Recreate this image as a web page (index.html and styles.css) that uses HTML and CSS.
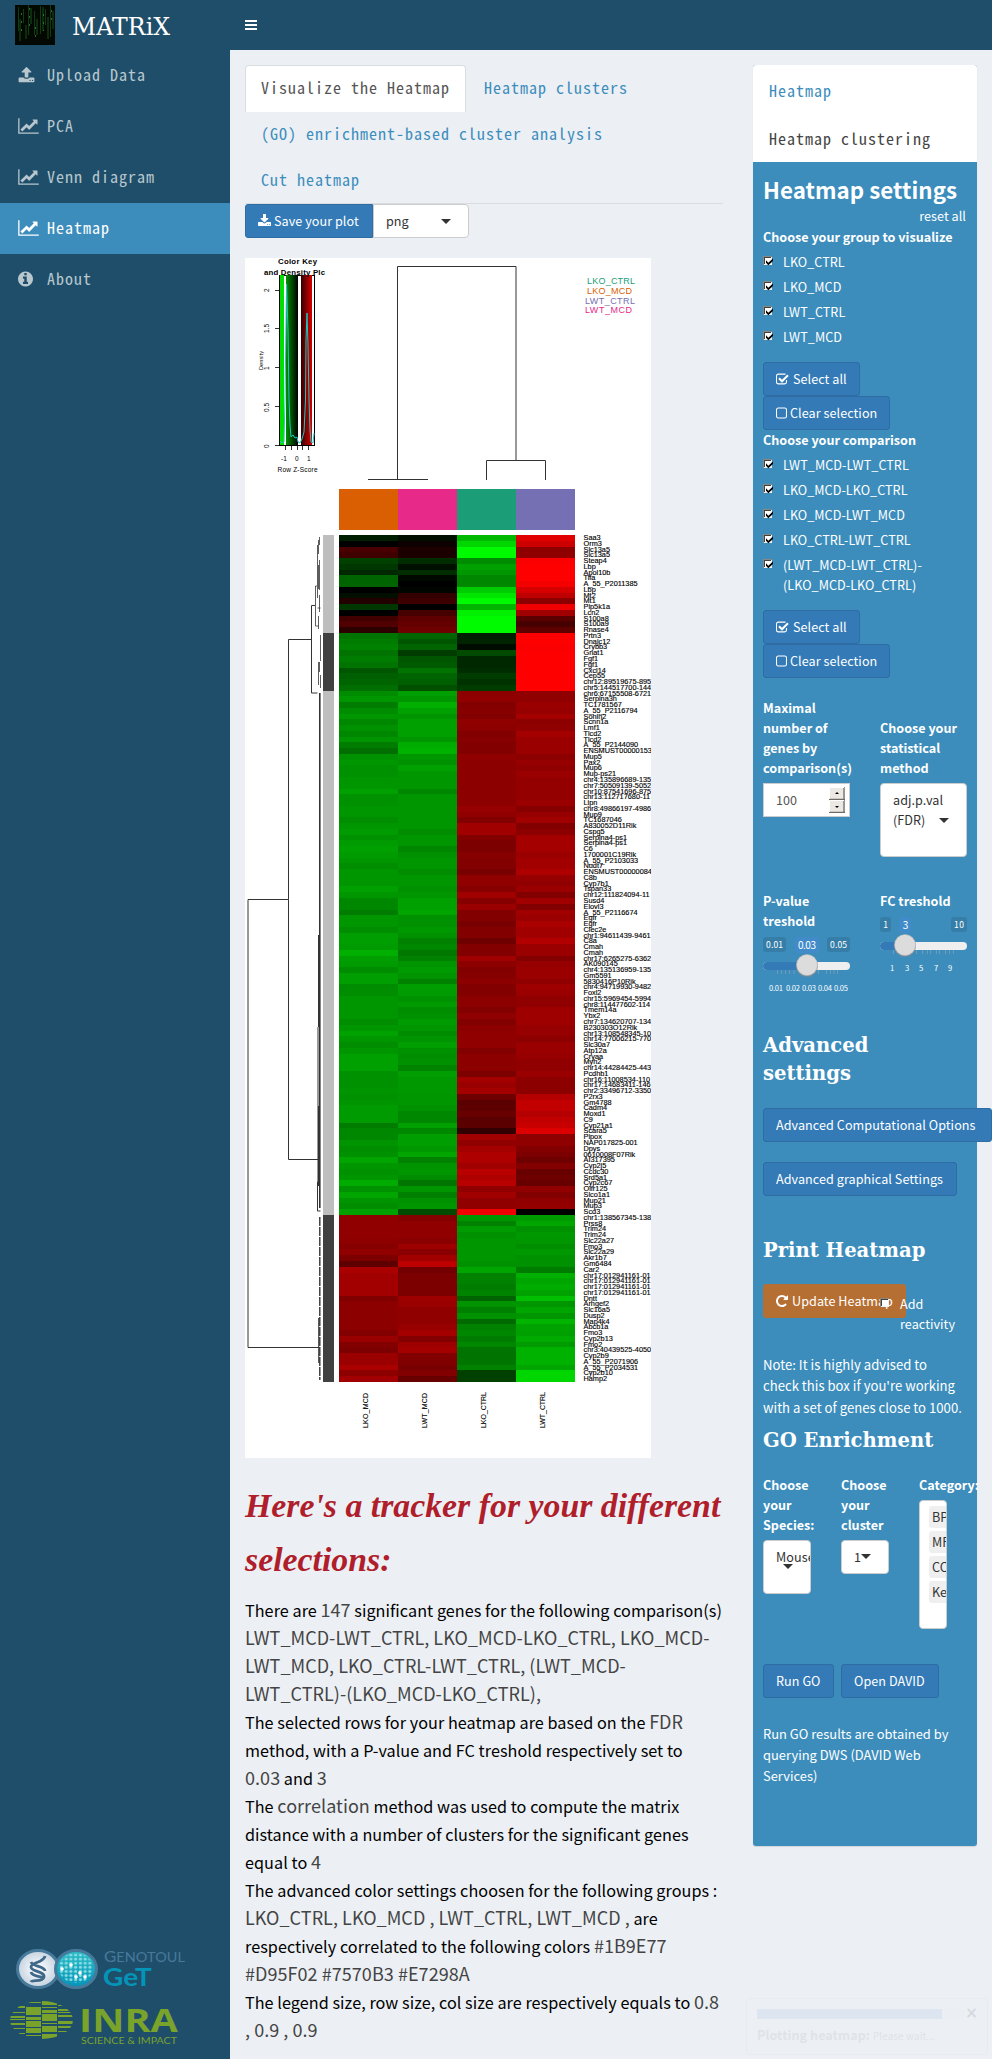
FILE: index.html
```html
<!DOCTYPE html>
<html lang="en">
<head>
<meta charset="utf-8">
<title>MATRiX</title>
<link rel="stylesheet" href="styles.css">
</head>
<body>
<svg width="0" height="0" class="defs">
  <symbol id="i-upload" viewBox="0 0 1792 1792"><path d="M1344 1472q0-26-19-45t-45-19-45 19-19 45 19 45 45 19 45-19 19-45zm256 0q0-26-19-45t-45-19-45 19-19 45 19 45 45 19 45-19 19-45zm128-224v320q0 40-28 68t-68 28h-1472q-40 0-68-28t-28-68v-320q0-40 28-68t68-28h427q21 56 70.5 92t110.5 36h256q61 0 110.5-36t70.5-92h427q40 0 68 28t28 68zm-325-648q-17 40-59 40h-256v448q0 26-19 45t-45 19h-256q-26 0-45-19t-19-45v-448h-256q-42 0-59-40-17-39 14-69l448-448q18-19 45-19t45 19l448 448q31 30 14 69z"/></symbol>
  <symbol id="i-chart" viewBox="0 0 2048 1792"><path d="M2048 1536v128h-2048v-1536h128v1408h1920zm-128-1248v435q0 21-19.5 29.5t-35.5-7.5l-121-121-633 633q-10 10-23 10t-23-10l-233-233-416 416-192-192 585-585q10-10 23-10t23 10l233 233 464-464-121-121q-16-16-7.5-35.5t29.5-19.5h435q14 0 23 9t9 23z"/></symbol>
  <symbol id="i-info" viewBox="128 0 1536 1792"><path d="M1152 1376v-160q0-14-9-23t-23-9h-96v-512q0-14-9-23t-23-9h-320q-14 0-23 9t-9 23v160q0 14 9 23t23 9h96v320h-96q-14 0-23 9t-9 23v160q0 14 9 23t23 9h448q14 0 23-9t9-23zm-128-896v-160q0-14-9-23t-23-9h-192q-14 0-23 9t-9 23v160q0 14 9 23t23 9h192q14 0 23-9t9-23zm640 416q0 209-103 385.5t-279.5 279.5-385.5 103-385.5-103-279.5-279.5-103-385.5 103-385.5 279.5-279.5 385.5-103 385.5 103 279.5 279.5 103 385.5z"/></symbol>
  <symbol id="i-download" viewBox="64 0 1664 1792"><path d="M1344 1344q0-26-19-45t-45-19-45 19-19 45 19 45 45 19 45-19 19-45zm256 0q0-26-19-45t-45-19-45 19-19 45 19 45 45 19 45-19 19-45zm128-224v320q0 40-28 68t-68 28h-1472q-40 0-68-28t-28-68v-320q0-40 28-68t68-28h465l135 136q58 56 136 56t136-56l136-136h464q40 0 68 28t28 68zm-325-569q17 41-14 70l-448 448q-18 19-45 19t-45-19l-448-448q-31-29-14-70 17-39 59-39h256v-448q0-26 19-45t45-19h256q26 0 45 19t19 45v448h256q42 0 59 39z"/></symbol>
  <symbol id="i-repeat" viewBox="128 0 1536 1792"><path d="M1664 256v448q0 26-19 45t-45 19h-448q-42 0-59-40-17-39 14-69l138-138q-148-137-349-137-104 0-198.5 40.5t-163.5 109.5-109.5 163.5-40.5 198.5 40.5 198.5 109.5 163.5 163.5 109.5 198.5 40.5q119 0 225-52t179-147q7-10 23-12 15 0 25 9l137 138q9 8 9.5 20.5t-7.5 22.5q-109 132-264 204.5t-327 72.5q-156 0-298-61t-245-164-164-245-61-298 61-298 164-245 245-164 298-61q147 0 284.5 55.5t244.5 156.5l130-129q29-31 70-14 39 17 39 59z"/></symbol>
  <symbol id="i-checked" viewBox="0 0 13 12"><path d="M10.5 7v2a1.9 1.9 0 0 1-1.9 1.9H2.4A1.9 1.9 0 0 1 .5 9V3a1.9 1.9 0 0 1 1.9-1.9h6.2q.6 0 1 .2" fill="none" stroke="#fff" stroke-width="1.1"/><path d="M3 5.3l3 3 6-6" fill="none" stroke="#fff" stroke-width="2"/></symbol>
  <symbol id="i-square" viewBox="0 0 11 12"><rect x=".5" y="1" width="10" height="10" rx="1.8" fill="none" stroke="#fff" stroke-width="1.1"/></symbol>
  <symbol id="i-box" viewBox="0 0 10 10"><path d="M0 0h9v9H0z" fill="#f2f2f2"/><path d="M0 9V0h9v1H1v8z" fill="#8a8680"/><path d="M1 8V1h7v1H2v6z" fill="#45423e"/><path d="M2 2h6v6H2z" fill="#fff"/></symbol>
  <symbol id="i-tick" viewBox="0 0 10 10"><use href="#i-box" width="10" height="10"/><path d="M3 4.2v2.6l2.3 2.4L10 5V2.6L5.3 6.8z" fill="#000"/></symbol>
</svg>

<header class="navbar">
  <div class="brand">
    <svg class="brand-art" viewBox="0 0 40 40">
      <rect width="40" height="40" fill="#030803"/>
      <g stroke="#0f4a12" stroke-width="1"><path d="M3.5 2v24M8.5 4v14M13.5 0v30M19.500 6v24M25.5 1v28M30.5 4v16M35.5 0v32" opacity=".8"/></g>
      <g stroke="#123c13" stroke-width="2" opacity=".7"><path d="M5 14v22M11 20v14M16 3v16M22 14v16M28 2v24M33 12v22M38 6v18"/></g>
      <g stroke="#4a7a49" stroke-width="1" stroke-dasharray="2 6" opacity=".8"><path d="M6.500 8v18M14.500 3v24M20.500 22v12M28.500 9v17M36.500 5v12"/></g>
    </svg>
    <span>MATRiX</span>
  </div>
  <div class="burger"><i></i><i></i><i></i></div>
</header>

<div class="shell">
  <aside class="sidebar">
    <nav>
      <a><svg class="w17"><use href="#i-upload"/></svg><span>Upload Data</span></a>
      <a><svg class="w21"><use href="#i-chart"/></svg><span>PCA</span></a>
      <a><svg class="w21"><use href="#i-chart"/></svg><span>Venn diagram</span></a>
      <a class="active"><svg class="w21"><use href="#i-chart"/></svg><span>Heatmap</span></a>
      <a><svg class="w15"><use href="#i-info"/></svg><span>About</span></a>
    </nav>
    <svg class="logos" viewBox="0 1940 230 119" width="230" height="119">
      <defs>
        <radialGradient id="pale"><stop offset=".3" stop-color="#f0f4f8"/><stop offset="1" stop-color="#c4d2df"/></radialGradient>
        <linearGradient id="teal" x2="0" y2="1"><stop offset="0" stop-color="#2fbfc6"/><stop offset="1" stop-color="#0394ba"/></linearGradient>
        <pattern id="dots" width="4.75" height="4.1" patternUnits="userSpaceOnUse" x="59" y="1953"><ellipse cx="2.400" cy="2" rx="1.600" ry="1.400" fill="#8adbe3"/></pattern>
        <clipPath id="globe"><ellipse cx="41.500" cy="2020" rx="31.500" ry="19"/></clipPath>
      </defs>
      <ellipse cx="38" cy="1969" rx="20.500" ry="18.500" fill="url(#pale)" stroke="#47799a" stroke-width="3"/>
      <path d="M45 1956c-1 7-14 6-14 11s14 4 13 10-12 2-13 5M31 1962c2 5 14 4 14 9M31 1972c1 5 10 4 13 6" fill="none" stroke="#3e6988" stroke-width="2.800"/>
      <ellipse cx="76" cy="1969" rx="20.500" ry="18.500" fill="url(#teal)" stroke="#47799a" stroke-width="3"/>
      <ellipse cx="76" cy="1968" rx="17" ry="15" fill="url(#dots)"/>
      <g fill="#fff"><circle cx="71" cy="1965" r="1.800"/><circle cx="62" cy="1969" r="1.800"/><circle cx="80" cy="1973" r="1.800"/><circle cx="85" cy="1977" r="1.800"/><circle cx="76" cy="1977" r="1.800"/></g>
      <text x="104" y="1962" class="lg-geno" textLength="81" lengthAdjust="spacingAndGlyphs">G<tspan font-size="12.500">ENOTOUL</tspan></text>
      <text x="103" y="1986" class="lg-get" textLength="49" lengthAdjust="spacingAndGlyphs">GeT</text>
      <g clip-path="url(#globe)" fill="#7aa32c">
        <path d="M10 2003h15v1H10zM10 2006h15v2H10zM10 2012h15v1H10zM10 2016h15v2H10zM10 2019h15v1H10zM10 2023h15v2H10zM10 2028h15v1H10zM10 2033h15v1H10z"/>
        <path d="M26 2002h15v1H26zM26 2007h15v8H26zM26 2017h15v3H26zM26 2021h15v6H26zM26 2028h15v5H26zM26 2035h15v1H26z"/>
        <path d="M42 2001h15v4H42zM42 2007h15v1H42zM42 2010h15v3H42zM42 2014h15v7H42zM42 2023h15v1H42zM42 2026h15v6H42zM42 2034h15v5H42z"/>
        <path d="M58 2005h15v1H58zM58 2009h15v2H58zM58 2012h15v1H58zM58 2015h15v2H58zM58 2021h15v3H58zM58 2026h15v2H58zM58 2031h15v1H58z"/>
      </g>
      <text x="79" y="2031.500" class="lg-inra" textLength="99" lengthAdjust="spacingAndGlyphs">INRA</text>
      <text x="81" y="2044" class="lg-sci" textLength="96" lengthAdjust="spacingAndGlyphs">SCIENCE &amp; IMPACT</text>
    </svg>
  </aside>

  <main class="main">
    <ul class="tabs">
      <li class="on">Visualize the Heatmap</li><li>Heatmap clusters</li><li>(GO) enrichment-based cluster analysis</li><li>Cut heatmap</li>
    </ul>
    <div class="save">
      <span class="btn"><svg class="ic13"><use href="#i-download"/></svg>Save your plot</span>
      <span class="picker">png<i class="caret"></i></span>
    </div>
    <svg id="plot" class="plot" viewBox="245 258 406 1200" width="406" height="1200">
      <defs>
        <linearGradient id="kg"><stop offset="0" stop-color="#009200"/><stop offset="1" stop-color="#000"/></linearGradient>
        <linearGradient id="kr"><stop offset="0" stop-color="#300"/><stop offset="1" stop-color="#d80000"/></linearGradient>
      </defs>
      <rect x="245" y="258" width="406" height="1200" fill="#fff"/>
      <g class="key">
        <rect x="279.500" y="275.500" width="35" height="170" fill="#fff" stroke="#000"/>
        <rect x="280" y="275" width="4" height="170" fill="#00e000"/>
        <rect x="286" y="275" width="12" height="170" fill="url(#kg)"/>
        <rect x="301" y="275" width="11" height="170" fill="url(#kr)"/>
        <polyline points="280,441 282,443 284,442 285,400 286.500,284 288,330 289,400 290,425 291,437 293,435 295,438 297,437 298,442 300,443 302,439 304,432 305.500,400 306,340 307,313 308,345 309,400 310,430 311,442 313,443 314,433" fill="none" stroke="#1dc9c4"/>
        <text x="297.500" y="264" text-anchor="middle" font-weight="bold" font-size="7.800" textLength="39">Color Key</text>
        <text x="264" y="275" font-weight="bold" font-size="7.800" textLength="61">and Density Plc</text>
        <path d="M275 290.500h4M275 328.500h4M275 367.500h4M275 406.500h4M275 445.500h4M285.500 446v4M291.500 446v4M297.500 446v4M302.500 446v4M308.500 446v4" stroke="#333" fill="none"/>
        <text transform="translate(269 292)rotate(-90)">2</text><text transform="translate(269 333)rotate(-90)">1.5</text><text transform="translate(269 370)rotate(-90)">1</text><text transform="translate(269 412)rotate(-90)">0.5</text><text transform="translate(269 448)rotate(-90)">0</text>
        <text transform="translate(263 370)rotate(-90)" class="dens" textLength="19" lengthAdjust="spacingAndGlyphs">Density</text>
        <text x="281" y="461">-1</text><text x="295" y="461">0</text><text x="307" y="461">1</text>
        <text x="277.500" y="472" textLength="40">Row Z-Score</text>
      </g>
      <g class="tree">
        <path d="M368 479.500h60M397.500 479V266.500h118.500V460.500M486.500 480V460.500h59V480"/>
        <path d="M288.500 899.500H248V1057M288.500 899.500V639.500h22.500M288.500 899.500v260h30M311.500 605.500v87.500h6M311.500 605.500h3.500M248 1057V1347.500h71" transform="translate(0 0)"/>
        <path d="M315.500 586v40h3M315.500 586h1.500M317.500 545v53M319.500 537v8M318.500 540v14M319.500 560v30M318.500 565v24M319.500 595v17M318.500 616v13M317.500 608h3M318.500 662v23M320.500 635v26M319.500 662v10M320.500 675v13" stroke-width=".8"/>
        <path d="M319.800 693V1208" stroke-width="1.600"/><path d="M318.500 935v92M318 1027v155h-.5v29h3M318.500 1106v80" stroke-width="1"/>
        <path d="M319.800 1217V1380" stroke-width="1.400" stroke-dasharray="9 1"/><path d="M318.700 1318v45"/>
      </g>
      <path d="M339 489h59v41h-59z" fill="#d95f02"/><path d="M398 489h59v41h-59z" fill="#e7298a"/><path d="M457 489h59v41h-59z" fill="#1b9e77"/><path d="M516 489h59v41h-59z" fill="#7570b3"/>
      <path d="M323 535h11v98h-11zM323 691h11v524h-11z" fill="#bebebe"/><path d="M323 633h11v58h-11zM323 1215h11v167h-11z" fill="#404040"/>
      <g id="cells" shape-rendering="crispEdges"></g>
      <g id="genes" class="genes"></g>
      <g class="legend">
        <text x="587" y="284" fill="#1b9e77" textLength="48">LKO_CTRL</text><text x="587" y="294" fill="#d95f02" textLength="45">LKO_MCD</text><text x="585" y="304" fill="#7570b3" textLength="50">LWT_CTRL</text><text x="585" y="313" fill="#e7298a" textLength="47">LWT_MCD</text>
      </g>
      <g class="cols">
        <text transform="translate(368 1428)rotate(-90)" textLength="35">LKO_MCD</text><text transform="translate(427 1428)rotate(-90)" textLength="35">LWT_MCD</text><text transform="translate(486 1428)rotate(-90)" textLength="36">LKO_CTRL</text><text transform="translate(545 1428)rotate(-90)" textLength="36">LWT_CTRL</text>
      </g>
    </svg>

    <h1 class="script"><span>Here's a tracker for your different</span><br><span>selections:</span></h1>
    <div class="tracker">There are <b>147</b> significant genes for the following comparison(s)<br><b>LWT_MCD-LWT_CTRL, LKO_MCD-LKO_CTRL, LKO_MCD-<br>LWT_MCD, LKO_CTRL-LWT_CTRL, (LWT_MCD-<br>LWT_CTRL)-(LKO_MCD-LKO_CTRL),</b><br>The selected rows for your heatmap are based on the <b>FDR</b><br>method, with a P-value and FC treshold respectively set to<br><b>0.03</b> and <b>3</b><br>The <b>correlation</b> method was used to compute the matrix<br>distance with a number of clusters for the significant genes<br>equal to <b>4</b><br>The advanced color settings choosen for the following groups :<br><b>LKO_CTRL, LKO_MCD , LWT_CTRL, LWT_MCD ,</b> are<br>respectively correlated to the following colors <b>#1B9E77<br>#D95F02 #7570B3 #E7298A</b><br>The legend size, row size, col size are respectively equals to <b>0.8<br>, 0.9 , 0.9</b></div>
  </main>

  <section class="side">
    <div class="box">
      <div class="box-tabs"><div class="link">Heatmap</div><div>Heatmap clustering</div></div>
      <div class="box-body">
        <h3 class="title">Heatmap settings</h3>
        <div class="reset">reset all</div>
        <div class="label">Choose your group to visualize</div>
        <div class="checks">
          <label><svg><use href="#i-tick"/></svg>LKO_CTRL</label><label><svg><use href="#i-tick"/></svg>LKO_MCD</label><label><svg><use href="#i-tick"/></svg>LWT_CTRL</label><label><svg><use href="#i-tick"/></svg>LWT_MCD</label>
        </div>
        <div class="pair"><span class="btn"><svg class="ic13"><use href="#i-checked"/></svg>Select all</span><span class="btn"><svg class="ic11"><use href="#i-square"/></svg>Clear selection</span></div>
        <div class="label">Choose your comparison</div>
        <div class="checks">
          <label><svg><use href="#i-tick"/></svg>LWT_MCD-LWT_CTRL</label><label><svg><use href="#i-tick"/></svg>LKO_MCD-LKO_CTRL</label><label><svg><use href="#i-tick"/></svg>LKO_MCD-LWT_MCD</label><label><svg><use href="#i-tick"/></svg>LKO_CTRL-LWT_CTRL</label><label><svg><use href="#i-tick"/></svg>(LWT_MCD-LWT_CTRL)-<br>(LKO_MCD-LKO_CTRL)</label>
        </div>
        <div class="pair"><span class="btn"><svg class="ic13"><use href="#i-checked"/></svg>Select all</span><span class="btn"><svg class="ic11"><use href="#i-square"/></svg>Clear selection</span></div>

        <div class="two stats">
          <div><div class="label">Maximal<br>number of<br>genes by<br>comparison(s)</div>
            <div class="number">100<svg width="16" height="26" viewBox="0 0 16 26"><path d="M0 0h16v13H0zM0 13h16v13H0z" fill="#ece9e4"/><path d="M15 0v26M0 12.500h16M0 25.500h16" stroke="#6f6c68" stroke-width="1.300"/><path d="M.5 12V.5H15M.5 25V13.500H15" stroke="#fff" fill="none"/><path d="M6 7l2-2 2 2zM6 19l2 2 2-2z"/></svg></div></div>
          <div><div class="label low">Choose your<br>statistical<br>method</div><div class="select tall">adj.p.val<br>(FDR)<i class="caret"></i></div></div>
        </div>
        <div class="two ranges">
          <div><div class="label">P-value<br>treshold</div>
            <svg class="slider" viewBox="0 0 87 64" width="87" height="64">
              <rect y="5" width="23" height="15" rx="3" fill="#367ea8"/><rect x="64" y="5" width="23" height="15" rx="3" fill="#367ea8"/><rect x="32" y="5" width="24" height="16" rx="3" fill="#428bca"/>
              <text x="11.500" y="16" textLength="17">0.01</text><text x="75.500" y="16" textLength="17">0.05</text><text x="44" y="17" class="cur" textLength="18">0.03</text>
              <path d="M14.500 37v5M18.500 37v5M22.500 37v5M26.500 37v5M31 37v5M55.500 37v5M63.500 37v5M67.500 37v5M71 37v5M74.500 37v5" stroke="#6b9bb8"/>
              <rect y="30" width="87" height="8" rx="4" fill="#efefef"/><path d="M44 30H4a4 4 0 0 0 0 8h40z" fill="#337ab7"/>
              <circle cx="44" cy="34" r="11" fill="#888" opacity=".6"/><circle cx="44" cy="33" r="10.500" fill="#dcdcdc" stroke="#b3b3b3" stroke-width=".6"/>
              <g class="ticks"><text x="13" y="59" textLength="14">0.01</text><text x="30" y="59" textLength="14">0.02</text><text x="46" y="59" textLength="14">0.03</text><text x="62" y="59" textLength="14">0.04</text><text x="78" y="59" textLength="14">0.05</text></g>
            </svg></div>
          <div><div class="label">FC treshold</div>
            <svg class="slider" viewBox="0 0 87 64" width="87" height="64">
              <rect y="5" width="11" height="15" rx="3" fill="#367ea8"/><rect x="71" y="5" width="16" height="15" rx="3" fill="#367ea8"/><rect x="19" y="5" width="12" height="16" rx="3" fill="#428bca"/>
              <text x="5.500" y="16">1</text><text x="79" y="16" textLength="10">10</text><text x="25.500" y="17" class="cur">3</text>
              <path d="M13.500 37v5M36.500 37v5M42.500 37v5M47.500 37v5M50.500 37v5M56.500 37v5M59.500 37v5M65.500 37v5M69.500 37v5M73.500 37v5" stroke="#6b9bb8"/>
              <rect y="30" width="87" height="8" rx="4" fill="#efefef"/><path d="M25 30H4a4 4 0 0 0 0 8h21z" fill="#337ab7"/>
              <circle cx="25" cy="34" r="11" fill="#888" opacity=".6"/><circle cx="25" cy="33" r="10.500" fill="#dcdcdc" stroke="#b3b3b3" stroke-width=".6"/>
              <g class="ticks"><text x="12" y="59">1</text><text x="27" y="59">3</text><text x="41" y="59">5</text><text x="56" y="59">7</text><text x="70" y="59">9</text></g>
            </svg></div>
        </div>

        <h4 class="serif adv">Advanced<br>settings</h4>
        <span class="btn w229">Advanced Computational Options</span>
        <span class="btn w194">Advanced graphical Settings</span>
        <h4 class="serif">Print Heatmap</h4>
        <div class="update"><span class="btn orange"><svg class="ic12"><use href="#i-repeat"/></svg>Update Heatmap</span>
          <label class="react"><svg><use href="#i-box"/></svg>Add<br>reactivity</label></div>
        <p class="note">Note: It is highly advised to<br>check this box if you're working<br>with a set of genes close to 1000.</p>
        <h4 class="serif go">GO Enrichment</h4>
        <div class="three">
          <div><div class="label">Choose<br>your<br>Species:</div><div class="select mouse">Mouse<i class="caret"></i></div></div>
          <div><div class="label">Choose<br>your<br>cluster</div><div class="select one">1<i class="caret"></i></div></div>
          <div><div class="label">Category:</div><div class="select cats"><span>BP</span><span>MF</span><span>CC</span><span>Kegg</span></div></div>
        </div>
        <div class="gobtns"><span class="btn w71">Run GO</span><span class="btn w98">Open DAVID</span></div>
        <p class="note last">Run GO results are obtained by<br>querying DWS (DAVID Web<br>Services)</p>
      </div>
    </div>
  </section>
</div>
<div class="toast"><div class="bar"><i></i></div><span class="x">×</span><div><b>Plotting heatmap:</b> <small>Please wait...</small></div></div>
<script src="heatmap.js"></script>
</body>
</html>
```
FILE: styles.css
```css
* { box-sizing: border-box; }
body { margin: 0; background: #ecf0f5; font: 12.6px/20px "Noto Sans CJK SC", "Noto Sans", sans-serif; letter-spacing: .06px; color: #333; height: 2059px; position: relative; overflow: hidden; }
.defs { position: absolute; }
.navbar { display: flex; height: 50px; background: #1f4e6a; }
.brand { width: 230px; padding: 5px 15px; display: flex; }
.brand-art { width: 40px; height: 40px; }
.brand span { margin-left: 17px; font: 23.6px/40px "DejaVu Serif", serif; color: #fff; padding-top: 2px; }
.burger { padding: 20px 15px; display: flex; flex-direction: column; gap: 2px; }
.burger i { width: 12px; height: 2px; background: #fff; }
.shell { display: flex; height: 2009px; }
.sidebar { width: 230px; flex: none; background: #1f4e6a; display: flex; flex-direction: column; justify-content: space-between; }
.sidebar a, .tabs, .box-tabs { font-family: "Noto Sans CJK SC", monospace; font-feature-settings: "hwid"; font-size: 16px; letter-spacing: 1px; }
.sidebar a { display: flex; align-items: center; height: 51px; padding: 0 0 2px 18px; color: #b8c7ce; fill: #b8c7ce; }
.sidebar a span { padding-bottom: 2px; }
.sidebar a.active { background: #3c8dbc; color: #fff; fill: #fff; }
.sidebar nav svg { height: 18px; flex: none; }
.w17 { width: 17px; margin-right: 12px; }
.w21 { width: 21px; margin-right: 8px; }
.w15 { width: 15px; margin-right: 14px; }
.logos { display: block; }
.lg-geno { font: 14.500px Lato, sans-serif; fill: #47799a; }
.lg-get { font: bold 25px Lato, sans-serif; fill: #0394b8; }
.lg-inra { font: bold 32px "Open Sans", sans-serif; fill: #7aa32c; }
.lg-sci { font: 9.500px Lato, sans-serif; fill: #7aa32c; }

.main { width: 508px; flex: none; padding: 15px; }
.tabs { list-style: none; margin: 0; padding: 0; display: flex; flex-wrap: wrap; height: 139px; border-bottom: 1px solid #dadde0; color: #3c8dbc; }
.tabs li { height: 46px; line-height: 42px; padding: 0 15px; margin-right: 2px; border: 1px solid transparent; white-space: nowrap; }
.tabs .on { background: #fff; border-color: #dadde0; border-bottom: 0; border-radius: 4px 4px 0 0; color: #555; height: 47px; margin-bottom: -1px; }
.save { display: flex; }
.btn { display: flex; align-items: center; width: max-content; height: 34px; padding: 0 12px; background: #337ab7; border: 1px solid #2e6da4; border-radius: 3px; color: #fff; fill: #fff; white-space: nowrap; }
.save .btn { width: 128px; border-radius: 3px 0 0 3px; }
.ic13 { width: 13px; height: 12px; margin-right: 4px; flex: none; }
.save .ic13 { height: 14px; margin-right: 3px; }
.ic11 { width: 11px; height: 12px; margin-right: 3px; flex: none; }
.ic12 { width: 12px; height: 14px; margin-right: 4px; flex: none; }
.picker { width: 96px; height: 34px; background: #fff; border: 1px solid #ccc; border-radius: 0 4px 4px 0; padding: 0 17px 0 12px; display: flex; align-items: center; justify-content: space-between; }
.caret { border: 5px solid transparent; border-top-color: #333; border-bottom: 0; width: 0; height: 0; }
.plot { display: block; margin-top: 20px; }
.plot text { font-family: "Liberation Sans", Arial, sans-serif; letter-spacing: 0; }
.key text { font-size: 6.500px; }
.key text[font-weight] { font-size: 7.800px; }
.key .dens { font-size: 5.500px; }
.tree path { fill: none; stroke: #333; }
.genes text { font-size: 6.300px; stroke: #000; stroke-width: .12px; }
.legend text { font-size: 9px; }
.cols text { font-size: 7px; stroke: #000; stroke-width: .1px; }

.script { margin: 21px 0 0; font: italic bold 33.8px/54px "Liberation Serif", serif; color: #af1e2a; white-space: nowrap; letter-spacing: 0; }
.tracker { margin-top: 9px; font-size: 16.2px; line-height: 28px; color: #000; white-space: nowrap; letter-spacing: .05px; }
.tracker b { font-weight: 400; font-size: 18px; color: #444; line-height: 20px; letter-spacing: .05px; }

.side { width: 254px; flex: none; padding: 15px; }
.box { width: 224px; height: 1781px; background: #3c8dbc; border-radius: 3px; box-shadow: 0 1px 1px rgba(0,0,0,.12); }
.box-tabs { height: 97px; background: #fff; border-radius: 3px 3px 0 0; padding: 1px 16px; line-height: 48px; color: #444; }
.box-tabs .link { color: #3c8dbc; }
.box-body { padding: 14px 10px; color: #fff; }
.title { margin: 0; font-size: 22.3px; line-height: 26px; white-space: nowrap; }
.reset { text-align: right; margin: 4px 1px 1px 0; }
.label { font-weight: 700; white-space: nowrap; letter-spacing: 0; }
.checks { display: flex; flex-direction: column; gap: 5px; margin: 5px 0 15px; }
.checks label, .react { display: block; position: relative; padding-left: 20px; white-space: nowrap; }
.checks svg, .react svg { position: absolute; left: 0; top: 4px; width: 10px; height: 10px; }
.two { display: grid; grid-template-columns: 87px 87px; column-gap: 30px; }
.stats { margin-top: 20px; height: 193px; }
.low { margin-top: 20px; }
.number, .select { margin-top: 5px; background: #fff; color: #333; border: 1px solid #ccc; }
.number { height: 34px; padding: 0 4px 0 12px; display: flex; align-items: center; justify-content: space-between; color: #555; }
.select { border-radius: 4px; position: relative; padding: 6px 12px; overflow: hidden; white-space: nowrap; }
.select .caret { position: absolute; }
.tall { height: 74px; }
.tall .caret { left: 58px; top: 34px; }
.ranges { height: 141px; }
.slider { display: block; margin-top: 1px; }
.slider text { font-size: 8.500px; fill: #fff; text-anchor: middle; letter-spacing: 0; }
.slider text.cur { font-size: 10px; }
.slider .ticks text { font-size: 7.600px; }
.serif { margin: 0; font: bold 18px/28px "DejaVu Serif", serif; font-size: 19.6px; white-space: nowrap; letter-spacing: 0; }
.adv { margin-bottom: 20px; }
.btn.w229 { width: 229px; margin-bottom: 20px; }
.btn.w194 { width: 194px; margin-bottom: 41px; }
.update { display: flex; margin-top: 19px; height: 70px; }
.orange { width: 143px; flex: none; background: #b66f33; border-color: #b66f33; }
.react { margin: 10px 0 0 -26px; }
.note { margin: 0; font-size: 13.1px; line-height: 21.3px; white-space: nowrap; letter-spacing: .02px; }
.go { margin-top: 9px; }
.three { display: grid; grid-template-columns: 48px 48px 28px; column-gap: 30px; margin-top: 20px; height: 189px; }
.mouse { height: 54px; } .mouse .caret { left: 19px; top: 23px; }
.one { height: 34px; } .one .caret { left: 19px; top: 13px; }
.cats { height: 129px; padding: 5px 0 0 12px; }
.cats span { display: block; width: 40px; height: 22px; margin-bottom: 3px; padding: 1px 3px; background: #efefef; border-radius: 3px; }
.cats { padding-left: 9px; }
.gobtns { display: flex; gap: 7px; }
.w71 { width: 71px; } .w98 { width: 98px; }
.last { margin-top: 25px; font-size: 12.900px; line-height: 21px; }

.toast { position: absolute; left: 746px; top: 1998px; width: 242px; height: 57px; border: 1px solid #e7eaef; border-radius: 3px; padding: 10px; opacity: .8; color: #dce0e6; }
.bar { width: 208px; height: 10px; background: #ebeff4; margin-bottom: 6px; }
.bar i { display: block; width: 185px; height: 10px; background: #d9e3ef; }
.toast small { font-size: 10px; }
.toast .x { position: absolute; right: 9px; top: 4px; font: bold 15px/20px "DejaVu Sans", sans-serif; color: #d0d4d9; }
```
FILE: heatmap.js
```js
// One gene per line: label, then row z-score shades for the four samples
// (negative = green channel, positive = red channel).
const rows = `Saa3 -30 -14 -185 225
Orm3 0 12 -215 205
Slc13a5 72 28 -250 140
Slc13a5 64 28 -250 145
Steap4 -65 -45 -140 250
Lbp -55 -15 -160 255
Apol10b -40 -45 -150 255
Tifa -100 -8 -135 255
A_55_P2011385 -100 0 -135 245
Lbp 0 -5 -205 215
Mt2 -15 50 -230 190
Mt1 35 60 -250 140
Pip5k1a -55 0 -180 240
Lcn2 0 70 -240 160
S100a8 65 95 -250 90
S100a9 80 100 -250 70
Rnase4 45 110 -250 95
Prtn3 -115 -100 -30 255
Dnajc12 -125 -85 -35 255
Crybb3 -130 -100 -12 250
Gnat1 -115 -60 -75 255
Fgf1 -125 -85 -40 255
Fgf1 -115 -90 -40 255
Cxcl14 -85 -115 -45 255
Cep55 -95 -100 -60 255
chr12:89519675-895 -100 -95 -50 255
chr5:144517700-144 -110 -80 -60 255
chr6:67155508-6721 -140 -160 140 145
Serpina3h -150 -150 145 145
TC1781567 -125 -175 130 155
A_55_P2116794 -140 -160 135 150
Sohlh2 -150 -148 130 165
Scnn1a -135 -160 145 140
Lmf1 -145 -160 140 145
Tlcd2 -135 -160 130 165
Tlcd2 -148 -150 135 155
A_55_P2144090 -125 -172 130 155
ENSMUST00000153 -110 -178 130 155
Mup5 -145 -150 145 140
Pax2 -150 -145 140 150
Mup6 -145 -160 140 145
Mup-ps21 -145 -150 140 155
chr4:135896689-135 -150 -150 140 148
chr7:50509139-5052 -150 -150 140 148
chr10:87541696-875 -160 -135 140 148
chr13:112717680-11 -145 -150 140 148
Lipn -145 -150 140 155
chr8:49866197-4986 -150 -150 150 135
Mup9 -150 -150 145 150
TC1687046 -142 -150 130 160
A830052D11Rik -150 -150 160 130
Cspg5 -155 -142 160 140
Serpina4-ps1 -145 -150 130 165
Serpina4-ps1 -155 -150 125 165
C6 -160 -135 125 165
1700001C19Rik -155 -145 135 155
A_55_P2103033 -150 -150 130 162
Nudt7 -142 -150 130 162
ENSMUST00000084 -150 -142 120 175
C8b -150 -150 145 150
Cyp7b1 -150 -150 145 145
Tspan33 -160 -145 135 155
chr12:111824094-11 -150 -150 160 130
Susd4 -135 -160 135 160
Elovl3 -135 -160 155 130
A_55_P2116674 -125 -165 130 160
Egfr -150 -145 130 155
Egfr -150 -145 120 170
Clec2e -142 -152 130 160
chr1:94611439-9461 -158 -145 130 160
C8a -158 -130 110 178
Cmah -155 -135 130 155
Cmah -175 -120 130 155
chr17:6265275-6362 -158 -130 160 130
AK090145 -155 -148 140 150
chr4:135136959-135 -140 -155 130 155
Gm5591 -158 -148 135 155
5830416P10Rik -158 -130 140 145
chr4:94719930-9482 -140 -158 130 158
Foxl2 -142 -155 130 155
chr15:5969454-5994 -150 -145 140 145
chr8:114477602-114 -150 -155 140 145
Tmem14a -150 -142 130 158
Ybx2 -150 -145 145 158
chr7:134620707-134 -142 -155 130 158
B230303O12Rik -150 -150 140 150
chr13:108548345-10 -162 -140 145 150
chr14:77006215-770 -150 -148 145 140
Slc30a7 -142 -158 145 155
Atp12a -150 -145 130 155
Cryaa -160 -142 140 150
Myh2 -160 -145 140 145
chr14:44284425-443 -160 -132 140 145
Pcdhb1 -145 -158 125 155
chr16:11008534-110 -145 -152 165 140
chr17:14683411-146 -145 -152 155 140
chr2:33496712-3350 -148 -152 165 140
P2rx3 -145 -150 110 180
Gm4788 -148 -150 90 195
Cadm4 -155 -145 95 195
Moxd1 -155 -135 105 180
C9 -155 -135 90 195
Cyp21a1 -125 -160 90 200
Scara5 -135 -135 50 220
Pipox -135 -158 160 140
NAP017825-001 -148 -158 145 145
Dpys -142 -152 165 130
0610008F07Rik -145 -165 175 125
AI317395 -165 -130 175 110
Cyp2j5 -150 -148 160 130
Ccdc30 -145 -150 185 105
Srd5a1 -150 -140 175 110
Cyp2c67 -172 -118 185 105
Olfr125 -145 -150 145 145
Slco1a1 -165 -128 160 130
Mup21 -148 -145 145 145
Mup3 -142 -150 145 148
Scd3 -160 -75 240 0
chr1:138567345-138 145 135 -150 -155
Prss8 145 145 -130 -165
Trim24 145 145 -155 -145
Trim24 145 145 -145 -152
Slc22a27 142 138 -150 -150
Fmo3 135 158 -150 -142
Slc22a29 145 138 -150 -152
Akr1b7 125 162 -150 -145
Gm6484 95 190 -145 -145
Car2 170 115 -165 -125
chr17:012941161-01 162 125 -130 -175
chr17:012941161-01 162 125 -130 -165
chr17:012941161-01 162 125 -125 -172
chr17:012941161-01 162 125 -132 -162
Dntt 128 158 -100 -190
Arhgef2 140 155 -148 -150
Slc16a5 140 145 -128 -165
Dusp2 140 145 -145 -150
Map4k4 140 145 -105 -180
Abcb1a 140 152 -130 -162
Fmo3 130 165 -135 -160
Cyp2b13 155 130 -125 -170
Fmo2 130 158 -135 -155
chr3:40439525-4050 125 165 -115 -178
Cyp2b9 155 130 -115 -178
A_55_P2071906 155 128 -118 -178
A_55_P2034531 170 120 -130 -165
Cyp2b10 140 130 -65 -215
Hamp2 162 105 -65 -215`.split("\n");

const NS = "http://www.w3.org/2000/svg";
const top0 = 535, step = 847 / rows.length;
const edges = [339, 398, 457, 516, 575];
const cells = document.getElementById("cells");
const genes = document.getElementById("genes");

rows.forEach((line, i) => {
  const [name, ...shades] = line.split(" ");
  const y = Math.round(top0 + i * step), h = Math.round(top0 + (i + 1) * step) - y;
  shades.map(Number).forEach((s, c) => {
    const r = document.createElementNS(NS, "rect");
    r.setAttribute("x", edges[c]);
    r.setAttribute("y", y);
    r.setAttribute("width", edges[c + 1] - edges[c]);
    r.setAttribute("height", h);
    r.setAttribute("fill", s < 0 ? `rgb(0,${-s},0)` : `rgb(${s},0,0)`);
    cells.appendChild(r);
  });
  const t = document.createElementNS(NS, "text");
  t.setAttribute("transform", `translate(583.5 ${y + 5})scale(1.165 1)`);
  t.textContent = name;
  genes.appendChild(t);
});
```
